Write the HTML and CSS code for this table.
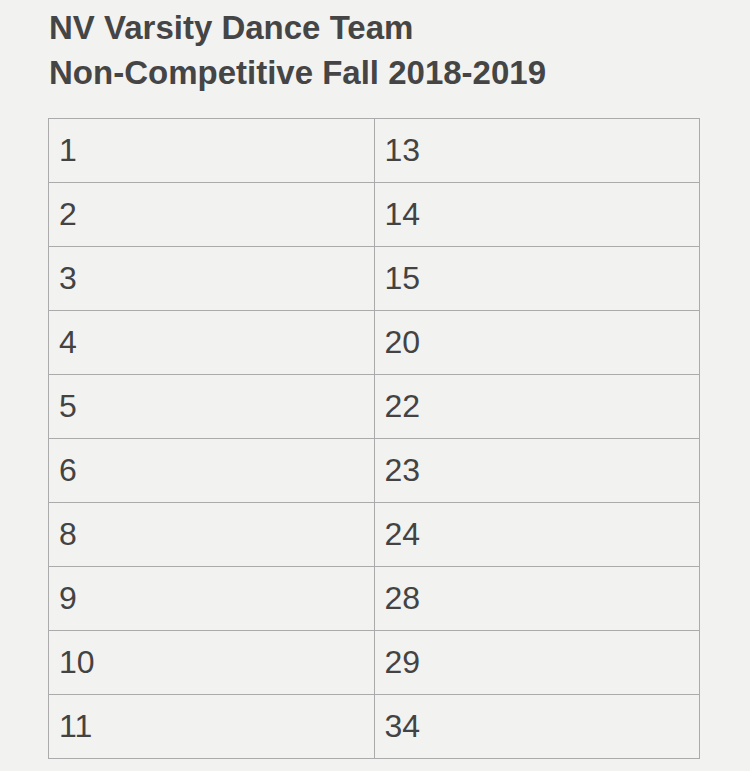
FILE: index.html
```html
<!DOCTYPE html>
<html>
<head>
<meta charset="utf-8">
<link rel="stylesheet" href="styles.css">
</head>
<body>
<div class="page">
  <h1 class="title">NV Varsity Dance Team<br>Non-Competitive Fall 2018-2019</h1>
  <table class="grid">
    <tr><td>1</td><td>13</td></tr>
    <tr><td>2</td><td>14</td></tr>
    <tr><td>3</td><td>15</td></tr>
    <tr><td>4</td><td>20</td></tr>
    <tr><td>5</td><td>22</td></tr>
    <tr><td>6</td><td>23</td></tr>
    <tr><td>8</td><td>24</td></tr>
    <tr><td>9</td><td>28</td></tr>
    <tr><td>10</td><td>29</td></tr>
    <tr><td>11</td><td>34</td></tr>
  </table>
</div>
</body>
</html>
```
FILE: styles.css
```css
html, body {
  margin: 0;
  padding: 0;
  background: #f2f2f1;
}
.page {
  padding: 5px 0 0 48px;
  font-family: "Liberation Sans", Arial, sans-serif;
  color: #434343;
}
.title {
  margin: 0 0 0 1px;
  font-size: 33px;
  font-weight: bold;
  line-height: 45px;
  color: #454545;
}
.grid {
  margin-top: 23px;
  width: 652px;
  border-collapse: collapse;
}
.grid td {
  border: 1px solid #ababab;
  height: 64px;
  padding: 0 0 2px 10px;
  box-sizing: border-box;
  font-size: 32px;
  line-height: 1;
  vertical-align: middle;
  width: 50%;
}
```
